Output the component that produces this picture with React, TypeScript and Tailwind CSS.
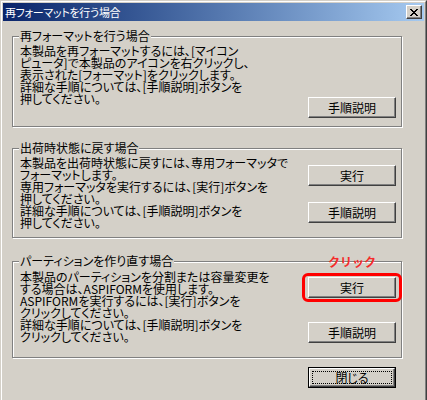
import { ReactNode } from "react";

const font = "font-['Noto_Sans_CJK_JP',sans-serif] [font-feature-settings:'palt']";

function ClassicButton({ label }: { label: string }) {
  return (
    <button className="flex h-[21px] w-[88px] items-center justify-center border border-t-white border-l-white border-r-[#404040] border-b-[#404040] bg-[#d4d0c8] text-[12px] leading-[12px] text-black shadow-[inset_-1px_-1px_0_#808080]">
      {label}
    </button>
  );
}

function DefaultButton({ label }: { label: string }) {
  return (
    <div className="h-[21px] w-[88px] border border-black">
      <div className="h-full border border-t-white border-l-white border-r-[#404040] border-b-[#404040] bg-[#d4d0c8] p-[2px] shadow-[inset_-1px_-1px_0_#808080]">
        <div className="flex h-full items-center justify-center border border-dotted border-black text-[12px] leading-[12px]">
          {label}
        </div>
      </div>
    </div>
  );
}

function GroupBox({
  title,
  className,
  textClass,
  lines,
  side,
}: {
  title: string;
  className: string;
  textClass: string;
  lines: string[];
  side: ReactNode;
}) {
  return (
    <div
      className={`relative ml-[9px] w-[390px] border border-[#808080] shadow-[inset_1px_1px_0_#fff,1px_1px_0_#fff] ${className}`}
    >
      <span className="absolute -top-[7px] left-[6px] bg-[#d4d0c8] px-[1px] text-[12px] leading-[12px] whitespace-nowrap">
        {title}
      </span>
      <div className="flex h-full pl-[7px] pr-[5px]">
        <div className={`flex-1 text-[12px] leading-[12px] whitespace-nowrap ${textClass}`}>
          {lines.map((l, i) => (
            <div key={i}>{l}</div>
          ))}
        </div>
        <div className="flex w-[88px] shrink-0 flex-col">{side}</div>
      </div>
    </div>
  );
}

export default function App() {
  return (
    <div className={`h-[400px] w-[427px] overflow-hidden bg-[#d4d0c8] text-black ${font}`}>
      <div className="h-full border-t border-l border-r border-t-[#d4d0c8] border-l-[#d4d0c8] border-r-[#404040]">
        <div className="h-full border-t border-l border-r border-t-white border-l-white border-r-[#808080] px-[1px] pt-[1px]">
          {/* title bar */}
          <div className="flex h-[18px] items-center justify-between bg-gradient-to-r from-[#0a246a] to-[#a6caf0] pl-[2px] pr-[2px]">
            <span className="text-[11px] leading-[12px] tracking-[-0.3px] text-white">再フォーマットを行う場合</span>
            <div className="flex h-[14px] w-[16px] items-center justify-center border border-t-white border-l-white border-r-[#404040] border-b-[#404040] bg-[#d4d0c8] shadow-[inset_-1px_-1px_0_#808080]">
              <svg width="8" height="7" viewBox="0 0 8 7" shapeRendering="crispEdges">
                <path d="M0 0h2v1h-2zM6 0h2v1h-2zM1 1h2v1h-2zM5 1h2v1h-2zM2 2h4v1h-4zM3 3h2v1h-2zM2 4h4v1h-4zM1 5h2v1h-2zM5 5h2v1h-2zM0 6h2v1h-2zM6 6h2v1h-2z" fill="#000" />
              </svg>
            </div>
          </div>

          <div className="pt-[15px]">
            <GroupBox
              title="再フォーマットを行う場合"
              className="h-[91px]"
              textClass="pt-[8px]"
              lines={[
                "本製品を再フォーマットするには、[マイコン",
                "ピュータ]で本製品のアイコンを右クリックし、",
                "表示された[フォーマット]をクリックします。",
                "詳細な手順については、[手順説明]ボタンを",
                "押してください。",
              ]}
              side={
                <div className="mt-[60px]">
                  <ClassicButton label="手順説明" />
                </div>
              }
            />

            <div className="mt-[21px]">
              <GroupBox
                title="出荷時状態に戻す場合"
                className="h-[90px]"
                textClass="pt-[8px]"
                lines={[
                  "本製品を出荷時状態に戻すには、専用フォーマッタで",
                  "フォーマットします。",
                  "専用フォーマッタを実行するには、[実行]ボタンを",
                  "押してください。",
                  "詳細な手順については、[手順説明]ボタンを",
                  "押してください。",
                ]}
                side={
                  <div className="mt-[16px] flex flex-col gap-[16px]">
                    <ClassicButton label="実行" />
                    <ClassicButton label="手順説明" />
                  </div>
                }
              />
            </div>

            <div className="mt-[23px]">
              <GroupBox
                title="パーティションを作り直す場合"
                className="h-[97px]"
                textClass="pt-[9px]"
                lines={[
                  "本製品のパーティションを分割または容量変更を",
                  "する場合は、ASPIFORMを使用します。",
                  "ASPIFORMを実行するには、[実行]ボタンを",
                  "クリックしてください。",
                  "詳細な手順については、[手順説明]ボタンを",
                  "クリックしてください。",
                ]}
                side={
                  <div className="mt-[15px] flex flex-col gap-[24px]">
                    <div className="relative">
                      <span className="absolute -top-[21px] left-0 right-0 text-center text-[12px] font-bold leading-[12px] text-[#f52a2a] [font-feature-settings:normal]">
                        クリック
                      </span>
                      <span className="pointer-events-none absolute -top-[4px] -bottom-[4px] -left-[6px] -right-[6px] rounded-[6px] border-[3px] border-[#ff0000]" />
                      <ClassicButton label="実行" />
                    </div>
                    <ClassicButton label="手順説明" />
                  </div>
                }
              />
            </div>

            <div className="ml-[9px] mt-[9px] flex w-[390px] justify-end pr-[6px]">
              <DefaultButton label="閉じる" />
            </div>
          </div>
        </div>
      </div>
    </div>
  );
}
